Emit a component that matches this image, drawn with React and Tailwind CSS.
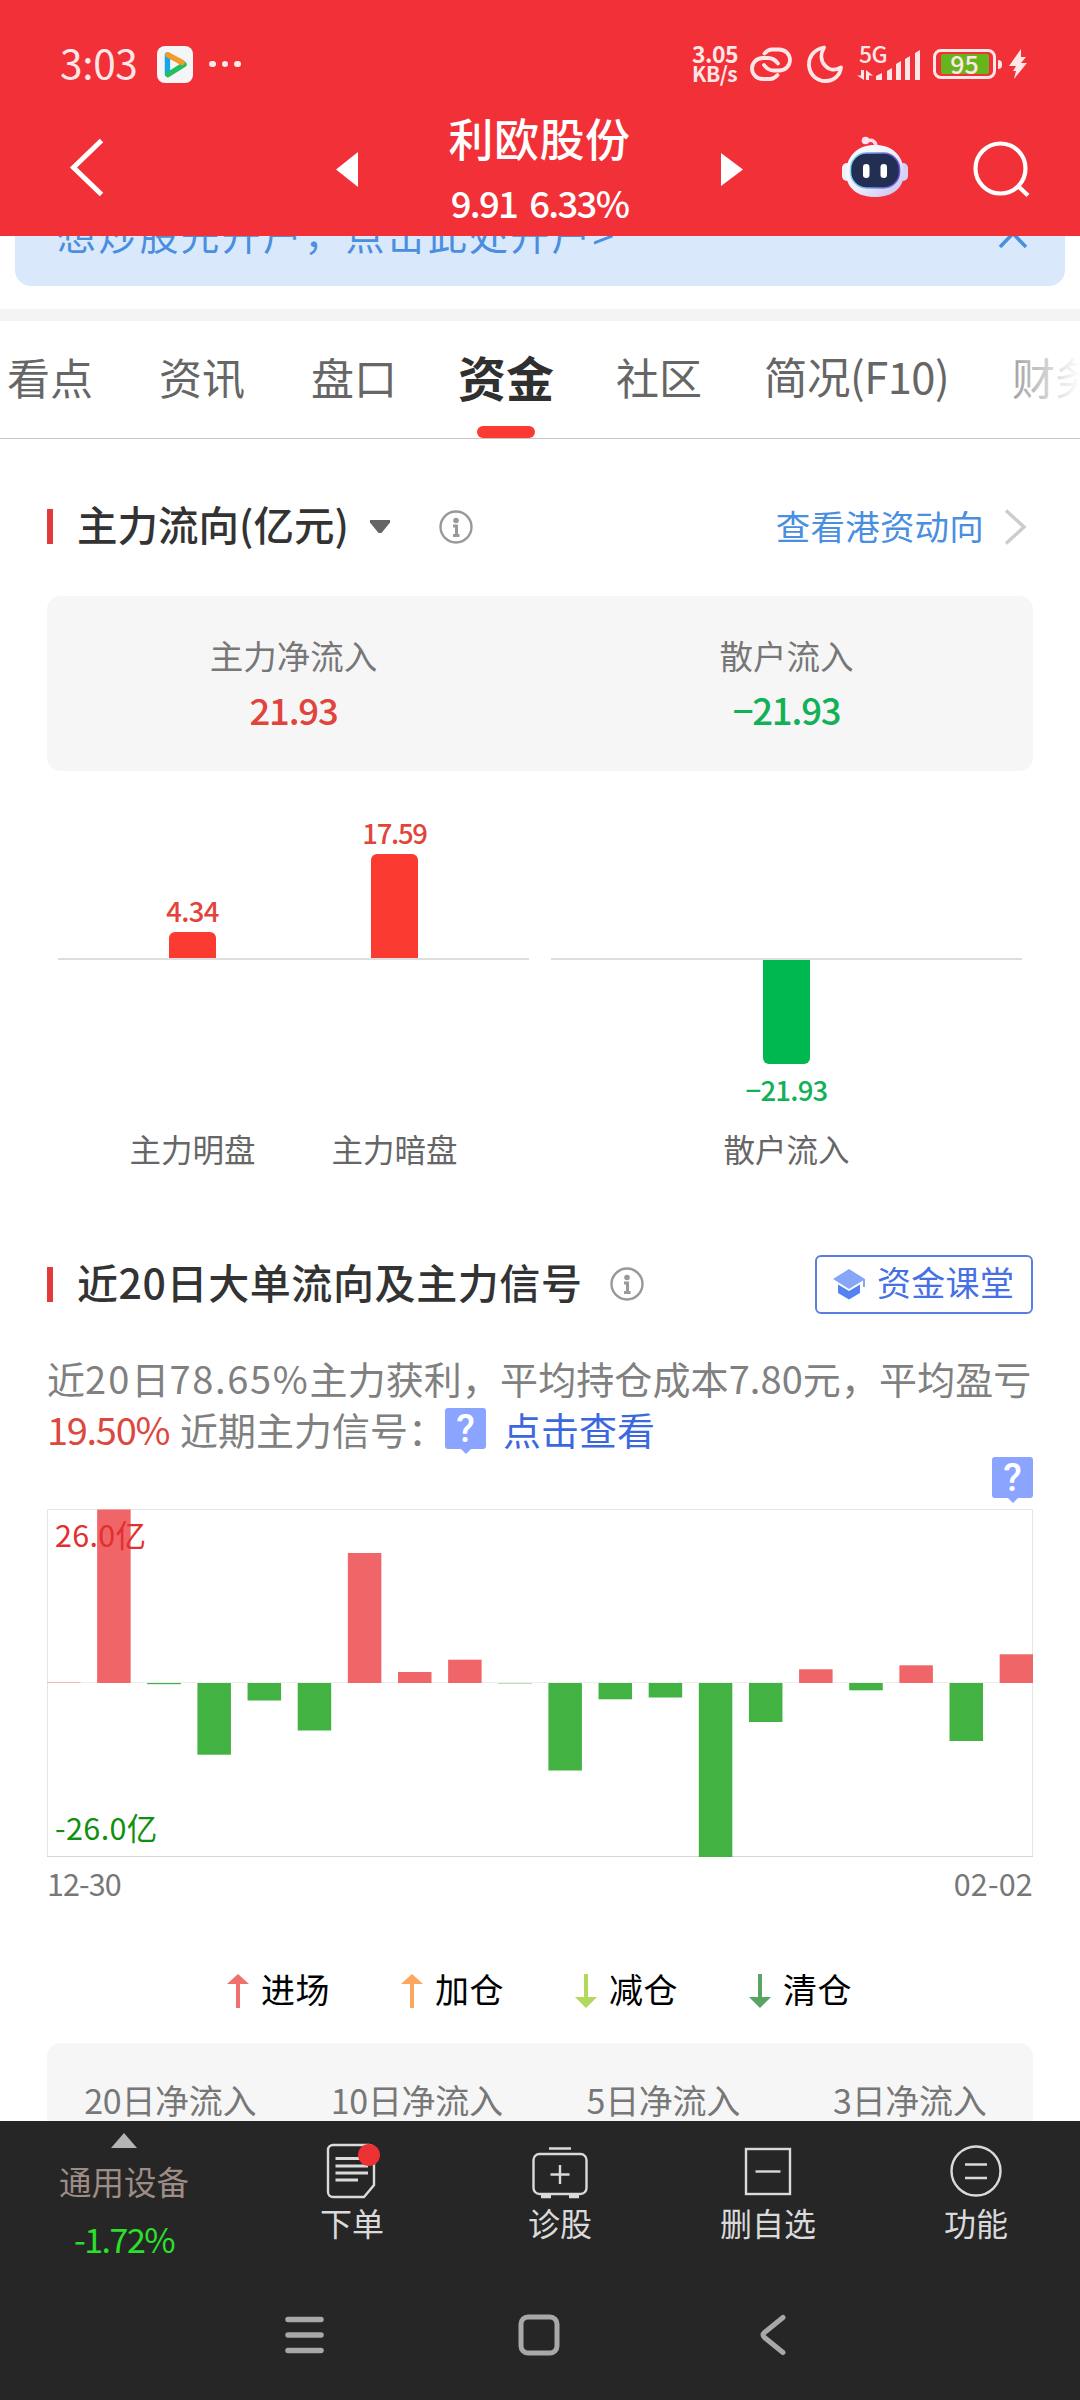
// bar lengths, positive = inflow
const DAILY_FLOW = [
  0.4, 173.5, -1.2, -71.7, -17.5, -47.5, 130, 11, 23.3, -0.4, -87.5, -16.3, -14.5, -174, -39, 13.7, -7.3, 17.7, -58, 28.7,
];

const LEGEND = [
  { label: "进场", color: "#f07070", up: true },
  { label: "加仓", color: "#fba75d", up: true },
  { label: "减仓", color: "#b2d85c", up: false },
  { label: "清仓", color: "#5aa565", up: false },
];

const TABS = ["看点", "资讯", "盘口", "资金", "社区", "简况(F10)", "财务"];

const PERIODS = ["20日净流入", "10日净流入", "5日净流入", "3日净流入"];

function StatusBar() {
  return (
    <div className="mt-[22px] flex h-[84px] items-center text-[#ffe6e7]">
      <span className="ml-[60px] w-[78px] pb-[5px] text-[40.500px] leading-[40px] tracking-[-0.300px]">3:03</span>
      <svg className="ml-[19px]" width="36" height="37" viewBox="0 0 36 37">
        <rect width="36" height="37" rx="8" fill="#f4f5f7" />
        <path d="M10.500 9v19" stroke="#18a5ec" strokeWidth="5.500" strokeLinecap="round" />
        <path d="M11 28.500 27 18.500" stroke="#22bf5c" strokeWidth="5.500" strokeLinecap="round" />
        <path d="M11 8.800 25 16.500" stroke="#f39a2c" strokeWidth="5.500" strokeLinecap="round" />
        <path d="M13.500 14v10l7.500-5z" fill="#f4f5f7" />
      </svg>
      <div className="ml-4 flex gap-[6px]">
        <i className="size-[6.500px] rounded-full bg-[#ffe6e7]" />
        <i className="size-[6.500px] rounded-full bg-[#ffe6e7]" />
        <i className="size-[6.500px] rounded-full bg-[#ffe6e7]" />
      </div>
      <div className="ml-auto flex items-center">
        <div className="w-[50px] pb-[2px] text-[23px] leading-[20px] font-bold whitespace-nowrap">
          <div className="tracking-[-0.500px]">3.05</div>
          <div className="text-[21px] tracking-[-0.500px]">KB/s</div>
        </div>
        <svg className="ml-[8px]" width="42" height="34" viewBox="0 0 42 34" fill="none" stroke="currentColor" strokeWidth="3.800" strokeLinecap="round">
          <path d="M14.500 6.500C17 3.500 19 2.500 22 2.500h7c6.500 0 11 5 11 10.500S35.500 23.500 29 23.500h-5c-5 0-7.500-2-10-5.500" />
          <path d="M27.500 28C25 31 23 32 20 32h-7C6.500 32 2 27 2 21.500S6.500 11 13 11h5c5 0 7.500 2 10 5.500" />
        </svg>
        <svg className="ml-[15px]" width="36" height="38" viewBox="0 0 36 38" fill="none" stroke="currentColor" strokeWidth="3.800" strokeLinejoin="round">
          <path d="M17 2.500C6 4.500 1.500 13 2 20.500 2.800 30 10 36 18.500 36 27 36 33 30.500 34 22.500 28 26 22 25 18 20.500 13.500 15.500 13.500 8.500 17 2.500Z" />
        </svg>
        <div className="relative ml-[13px] h-[36px] w-[64px]">
          <span className="absolute top-[-3px] left-[3px] text-[23px] leading-[20px] font-medium tracking-[-0.500px]">5G</span>
          <svg className="absolute inset-0" width="64" height="36" viewBox="0 0 64 36" fill="currentColor">
            <path d="M5 24h3v10L1 29.500h4zM10 34V24l7 5.500h-4V34z" />
            <path d="M20 34v-4l6-3v7zM31 34v-9l5-3v12zM40 34V18l5-3v19zM49 34V13l5-3v24zM59 34V7l5-3v30z" />
          </svg>
        </div>
        <div className="ml-[13px] flex h-[30px] w-[63px] items-center justify-center rounded-[8px] border-[3px] border-[#ffe6e7]">
          <span className="flex h-[20px] w-[48px] items-center justify-center rounded-[2px] bg-[#66b51c] pb-[3px] text-[25px] leading-[20px] font-medium">95</span>
        </div>
        <i className="ml-[2px] h-[9px] w-[4px] rounded-r-full bg-[#ffe6e7]" />
        <svg className="mr-[53px] ml-[7px]" width="18" height="30" viewBox="0 0 18 30" fill="currentColor">
          <path d="M12 0 0 17h7L4 22h3L5 30l13-16h-6l5-6h-5z" />
        </svg>
      </div>
    </div>
  );
}

function Robot() {
  return (
    <svg className="mt-[29px] ml-[97px]" width="70" height="64" viewBox="0 0 70 64">
      <defs>
        <linearGradient id="shell" x1="0" y1="0" x2="1" y2="1">
          <stop offset="0" stopColor="#fff" />
          <stop offset="0.500" stopColor="#efeffb" />
          <stop offset="1" stopColor="#c3bdf0" />
        </linearGradient>
        <linearGradient id="rim" x1="0" y1="0" x2="1" y2="0">
          <stop offset="0" stopColor="#7fd8ee" />
          <stop offset="1" stopColor="#6a4fd8" />
        </linearGradient>
      </defs>
      <path d="M27 6c6-2 9 1 9 6" fill="none" stroke="#f6d9ee" strokeWidth="3.500" />
      <circle cx="25.500" cy="5.500" r="3.800" fill="#fbe4f0" />
      <rect x="2" y="28" width="10" height="18" rx="5" fill="#eef1fb" />
      <rect x="58" y="28" width="10" height="18" rx="5" fill="#d5d0f5" />
      <path d="M35 10c17 0 28 10 29 27C64 53 53 62 35 62S6 53 6 37C7 20 18 10 35 10Z" fill="url(#shell)" />
      <rect x="10.500" y="18" width="49" height="35" rx="16" fill="#232f52" stroke="url(#rim)" strokeWidth="1.500" />
      <rect x="23" y="29" width="6.500" height="14" rx="3.200" fill="#fff" />
      <rect x="40.500" y="29" width="6.500" height="14" rx="3.200" fill="#fff" />
    </svg>
  );
}

function Header() {
  return (
    <header className="relative z-10 h-[236px] shrink-0 overflow-hidden bg-[#f23038] text-white">
      <StatusBar />
      <div className="flex h-[130px] items-start">
        <svg className="mt-[31px] ml-[66px]" width="40" height="60" viewBox="0 0 40 60" fill="none" stroke="currentColor" strokeWidth="5">
          <path d="M35.500 3.500 7.500 30.500l28 27" />
        </svg>
        <svg className="mt-[46px] ml-[230px]" width="22" height="35" viewBox="0 0 22 35" fill="currentColor">
          <path d="M22 0v35L0 17.500z" />
        </svg>
        <div className="w-[363px] text-center whitespace-nowrap">
          <h1 className="text-[45px] leading-[64px] font-medium tracking-[0.500px]">利欧股份</h1>
          <p className="text-[36.500px] leading-[66px] font-medium tracking-[-1.700px]">
            9.91<span className="ml-[12px]">6.33%</span>
          </p>
        </div>
        <svg className="mt-[47px]" width="22" height="33" viewBox="0 0 22 33" fill="currentColor">
          <path d="M0 0v33l22-16.500z" />
        </svg>
        <Robot />
        <svg className="mt-[33px] ml-[61px]" width="60" height="60" viewBox="0 0 60 60" fill="none" stroke="currentColor" strokeWidth="4.200">
          <circle cx="29.500" cy="29.500" r="25" />
          <path d="m47 47 10 9.500" />
        </svg>
      </div>
    </header>
  );
}

function InfoIcon() {
  return (
    <svg width="34" height="34" viewBox="0 0 34 34" fill="none" stroke="#999">
      <circle cx="17" cy="17" r="15.500" strokeWidth="2.400" />
      <circle cx="17" cy="10.500" r="2.800" fill="#999" stroke="none" />
      <path d="M14 16h3.500v9M14 25.500h6.500" strokeWidth="3" />
    </svg>
  );
}

function SignalBadge() {
  return (
    <span className="relative flex h-[41px] w-[41px] items-center justify-center rounded-[3px] bg-[#8aa4ff] pt-[2px] font-['Roboto',sans-serif] text-[38px] leading-[39px] font-medium text-white">
      ?
      <i className="absolute bottom-[-5px] left-[15px] h-0 w-0 border-x-[6px] border-t-[6px] border-x-transparent border-t-[#8aa4ff]" />
    </span>
  );
}

function SectionTitle({ className, children }) {
  return (
    <div className="flex items-center">
      <i className="h-[35px] w-[6px] bg-[#e03a3a]" />
      <h2 className={`ml-[24px] pb-[6px] leading-[50px] font-medium whitespace-nowrap text-[#333] ${className}`}>{children}</h2>
    </div>
  );
}

function Tabs() {
  return (
    <nav className="relative flex h-[118px] items-center gap-[66px] overflow-hidden border-b border-[#c6c6c6] pb-[7px] pl-[7px] whitespace-nowrap">
      {TABS.map((tab) =>
        tab === "资金" ? (
          <div key={tab} className="relative -mr-[4px] -ml-[5px] flex h-full items-center text-[48px] font-bold text-[#303030]">
            {tab}
            <i className="absolute bottom-[-7px] left-[19px] h-[12px] w-[58px] rounded-full bg-[#fb3b32]" />
          </div>
        ) : (
          <span key={tab} className={tab === "简况(F10)" ? "-ml-[4px] w-[182px] text-[43.500px] tracking-[-0.500px] text-[#666]" : "text-[43px] text-[#666]"}>
            {tab}
          </span>
        )
      )}
      <div className="absolute top-0 right-0 h-full w-[110px] bg-gradient-to-r from-white/0 to-white" />
    </nav>
  );
}

function FlowSection() {
  return (
    <section>
      <div className="flex h-[157px] items-center px-[47px] pt-[18px]">
        <SectionTitle className="text-[40.500px]">主力流向(亿元)</SectionTitle>
        <svg className="ml-[20px]" width="22" height="14" viewBox="0 0 22 14" fill="#666">
          <path d="M1 0h20v2.500L12.500 13h-3L1 2.500z" />
        </svg>
        <div className="ml-[48px]">
          <InfoIcon />
        </div>
        <span className="mr-[20px] ml-auto pb-[4px] text-[34.500px] leading-[50px] tracking-[0.200px] text-[#4a8fdf]">查看港资动向</span>
        <svg className="mr-[6px]" width="23" height="36" viewBox="0 0 23 36" fill="none" stroke="#ccc" strokeWidth="3.500">
          <path d="m2 1.500 18 16.500-18 16.500" />
        </svg>
      </div>

      <div className="mx-[47px] grid h-[175px] grid-cols-2 rounded-[14px] bg-[#f6f6f6] pt-[35px] text-center">
        <div>
          <div className="text-[33.500px] leading-[48px] text-[#777]">主力净流入</div>
          <div className="text-[36.500px] leading-[62px] font-medium tracking-[-1.200px] text-[#e0443a]">21.93</div>
        </div>
        <div>
          <div className="text-[33.500px] leading-[48px] text-[#777]">散户流入</div>
          <div className="text-[36.500px] leading-[62px] font-medium tracking-[-1.200px] text-[#12b057]">−21.93</div>
        </div>
      </div>

      <div className="mx-[58px] flex gap-[22px] text-center">
        <div className="w-[471px]">
          <div className="flex h-[189px] items-end justify-center border-b-2 border-[#dedede]">
            <div className="flex w-[202px] flex-col items-center">
              <span className="mb-[4px] text-[27.500px] leading-[36px] font-medium tracking-[-0.700px] text-[#e0443a]">4.34</span>
              <i className="h-[26px] w-[47px] rounded-t-[6px] bg-[#fb3b32]" />
            </div>
            <div className="flex w-[202px] flex-col items-center">
              <span className="mb-[4px] text-[27.500px] leading-[36px] font-medium tracking-[-1.300px] text-[#e0443a]">17.59</span>
              <i className="h-[104px] w-[47px] rounded-t-[6px] bg-[#fb3b32]" />
            </div>
          </div>
          <div className="flex justify-center pt-[164px] text-[31.500px] leading-[48px] text-[#666]">
            <span className="w-[202px]">主力明盘</span>
            <span className="w-[202px]">主力暗盘</span>
          </div>
        </div>
        <div className="w-[471px]">
          <div className="h-[189px] border-b-2 border-[#dedede]" />
          <div className="flex h-[164px] flex-col items-center">
            <i className="h-[104px] w-[47px] rounded-b-[6px] bg-[#00b850]" />
            <span className="mt-[7px] text-[27.500px] leading-[36px] font-medium tracking-[-0.800px] text-[#12b057]">−21.93</span>
          </div>
          <div className="text-[31.500px] leading-[48px] text-[#666]">散户流入</div>
        </div>
      </div>
    </section>
  );
}

function DailyChart() {
  return (
    <div className="relative mt-[5px] h-[348px]">
      <svg width="986" height="348" viewBox="0 0 986 348">
        <rect x="0.500" y="0.500" width="985" height="347" fill="none" stroke="#e6e6e6" />
        <path d="M0 173.500h986" stroke="#eee" />
        <path d="M0 347.500h986" stroke="#d6d6d6" />
        {DAILY_FLOW.map((v, i) => (
          <rect
            key={i}
            x={i * 50.14}
            y={v > 0 ? 174 - v : 174}
            width="33.500"
            height={Math.abs(v)}
            fill={v > 0 ? "#f06567" : "#42b242"}
          />
        ))}
      </svg>
      <span className="absolute top-[5px] left-[8px] text-[30.500px] leading-[40px] tracking-[0.300px] text-[#e03030]">26.0亿</span>
      <span className="absolute top-[298px] left-[8px] text-[30.500px] leading-[40px] tracking-[0.400px] text-[#109010]">-26.0亿</span>
    </div>
  );
}

function SignalSection() {
  return (
    <section className="mt-[76px] px-[47px]">
      <div className="flex h-[72px] items-center">
        <SectionTitle className="text-[41px] tracking-[0.600px]">近20日大单流向及主力信号</SectionTitle>
        <div className="ml-[27px]">
          <InfoIcon />
        </div>
        <div className="ml-auto flex h-[59px] w-[218px] items-center rounded-[6px] border-2 border-[#5b7fe0] pl-[15px] text-[34px] whitespace-nowrap text-[#4670e4]">
          <svg width="34" height="32" viewBox="0 0 34 32">
            <path d="M17 1 33 11v8h-2v-6.500L17 21 1 11z" fill="#86a6f8" />
            <path d="M6 16.500 17 23l11-6.500V25l-11 6.500L6 25z" fill="#5482f3" />
          </svg>
          <span className="ml-[11px] pb-[4px] leading-[50px] tracking-[0.300px]">资金课堂</span>
        </div>
      </div>

      <div className="mt-[32px] text-[38px] leading-[51px] whitespace-nowrap text-[#808080]">
        <p className="tracking-[0.100px]">
          近<span className="tracking-[2px]">20</span>日<span className="tracking-[1.700px]">78.65%</span>主力获利，平均持仓成本7.80元，平均盈亏
        </p>
        <div className="flex">
          <span className="w-[133px] tracking-[-1.300px] text-[#dd483e]">19.50%</span>
          <span className="w-[265px]">近期主力信号：</span>
          <span className="pt-[5px]">
            <SignalBadge />
          </span>
          <span className="ml-[17px] text-[#3b68df]">点击查看</span>
        </div>
      </div>
      <div className="mt-[3px] flex h-[47px] justify-end">
        <SignalBadge />
      </div>

      <DailyChart />
      <div className="mt-[6px] flex h-[39px] justify-between text-[30.500px] leading-[40px] text-[#777]">
        <span className="tracking-[-0.900px]">12-30</span>
        <span className="tracking-[0.200px]">02-02</span>
      </div>

      <div className="mt-[64px] flex h-[50px] pl-[180px]">
        {LEGEND.map((item) => (
          <div key={item.label} className="flex w-[174px] items-center whitespace-nowrap">
            <svg width="22" height="34" viewBox="0 0 22 34" fill={item.color}>
              {item.up ? <path d="M11 0 22 10h-9v24H9V10H0z" /> : <path d="M11 34 0 23h9V0h4v23h9z" />}
            </svg>
            <span className="ml-[12px] pb-[4px] text-[34px] leading-[46px] tracking-[0.500px] text-black">{item.label}</span>
          </div>
        ))}
      </div>

      <div className="mt-[27px] grid h-[120px] grid-cols-4 rounded-t-[14px] bg-[#f6f6f6] pt-[33px] text-center text-[34px] leading-[48px] tracking-[-0.300px] text-[#777]">
        {PERIODS.map((p) => (
          <span key={p}>{p}</span>
        ))}
      </div>
    </section>
  );
}

function NavItem({ label, children }) {
  return (
    <div className="flex w-[208px] flex-col items-center pt-[19px]">
      <svg width="60" height="62" viewBox="0 0 60 62" fill="none" stroke="#dadada" strokeWidth="2.400">
        {children}
      </svg>
      <span className="text-[32px] leading-[40px] text-[#dadada]">{label}</span>
    </div>
  );
}

function BottomBar() {
  return (
    <footer className="h-[279px] shrink-0 bg-[#262626]">
      <div className="flex h-[149px]">
        <div className="flex w-[248px] flex-col items-center pt-[12px] whitespace-nowrap">
          <svg width="26" height="15" viewBox="0 0 26 15" fill="#b4b4b4">
            <path d="M13 0 26 15H0z" />
          </svg>
          <span className="mt-[9px] text-[32.500px] leading-[48px] text-[#9e8c86]">通用设备</span>
          <span className="mt-[9px] text-[34px] leading-[50px] tracking-[-1.500px] text-[#2be02b]">-1.72%</span>
        </div>
        <NavItem label="下单">
          <path d="M11 5h36a5 5 0 0 1 5 5v35L42 57H11a5 5 0 0 1-5-5V10a5 5 0 0 1 5-5Z" />
          <path d="M13.500 18.500H40M13.500 26H46M13.500 33H46M13.500 40H36" strokeWidth="2.800" />
          <circle cx="47" cy="15" r="11" fill="#eb3134" stroke="none" />
        </NavItem>
        <NavItem label="诊股">
          <rect x="3.500" y="14" width="53" height="40" rx="6" />
          <path d="M19 8.500h22M30 25v19M20.500 34.500h19" />
          <path d="M11 56.500h10M39 56.500h10" strokeWidth="3.500" />
        </NavItem>
        <NavItem label="删自选">
          <rect x="8" y="9" width="44" height="45" />
          <path d="M17.500 31.500h25" />
        </NavItem>
        <NavItem label="功能">
          <circle cx="30" cy="31" r="24.500" />
          <path d="M19 24.500h22M19 38h22" />
        </NavItem>
      </div>
      <div className="flex h-[130px] items-center">
        <svg className="ml-[285px]" width="39" height="38" viewBox="0 0 39 38" stroke="#a8a8a8" strokeWidth="5.500" strokeLinecap="round">
          <path d="M3 3.500h33M3 19h33M3 34.500h33" />
        </svg>
        <svg className="ml-[194px]" width="42" height="42" viewBox="0 0 42 42" fill="none" stroke="#a8a8a8" strokeWidth="5">
          <rect x="3" y="3" width="36" height="36" rx="7" />
        </svg>
        <svg className="ml-[200px]" width="26" height="42" viewBox="0 0 26 42" fill="none" stroke="#a8a8a8" strokeWidth="5" strokeLinecap="round" strokeLinejoin="round">
          <path d="M23 3.500 4.500 18.500q-3 2.500 0 5L23 38.500" />
        </svg>
      </div>
    </footer>
  );
}

export default function App() {
  return (
    <div className="flex h-[2400px] w-[1080px] flex-col overflow-hidden bg-white font-['Noto_Sans_CJK_SC',sans-serif]">
      <Header />
      <main className="h-[1885px] shrink-0 overflow-hidden">
        {/* promo strip, scrolled halfway under the header */}
        <div className="mx-[15px] h-[50px] overflow-hidden rounded-b-[16px] bg-[#dae8fb]">
          <div className="mt-[-50px] flex h-[94px] items-center justify-between pr-[37px] pl-[42px] whitespace-nowrap text-[#4a8fdf]">
            <span className="text-[39px] tracking-[2.200px]">想炒股先开户，点击此处开户&gt;</span>
            <svg width="30" height="30" viewBox="0 0 30 30" stroke="currentColor" strokeWidth="3.500">
              <path d="m2 2 26 27M28 2 2 29" />
            </svg>
          </div>
        </div>
        <div className="mt-[23px] h-[12px] bg-[#f4f4f4]" />
        <Tabs />
        <FlowSection />
        <SignalSection />
      </main>
      <BottomBar />
    </div>
  );
}
